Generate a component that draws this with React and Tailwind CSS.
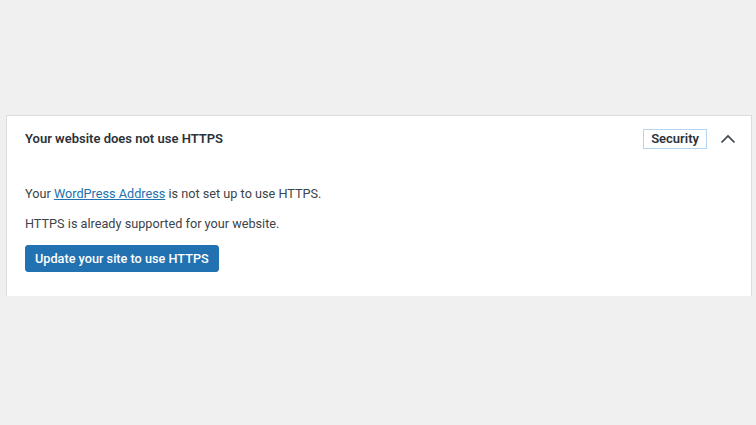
export default function App() {
  return (
    <div
      className="min-h-[425px] w-full bg-[#f0f0f1] pt-[115px] pl-[6px] pr-[4px]"
      style={{ fontFamily: 'Roboto, "Liberation Sans", Arial, sans-serif' }}
    >
      <div className="bg-white border-t border-l border-r border-[#dcdcde] text-[#1d2327]">
        <div className="h-[46px] flex items-center pl-[18px] pr-[15px]">
          <h4 className="flex-1 text-[13px] font-semibold text-[#2c3338]">Your website does not use HTTPS</h4>
          <span className="h-[20px] px-[7px] flex items-center border border-[#b5d6f2] text-[13px] font-semibold text-[#2c3338]">
            Security
          </span>
          <svg className="ml-[13px]" width="16" height="10" viewBox="0 0 16 10" fill="none">
            <polyline points="1.5,8.5 8,2 14.5,8.5" stroke="#3c434a" strokeWidth="1.7" />
          </svg>
        </div>
        <div className="pl-[18px] pt-[22px] pb-[24px] text-[12.7px] text-[#3c434a]">
          <p className="leading-[20px]">
            Your{" "}
            <a href="#" className="text-[#2271b1] underline">WordPress Address</a>{" "}
            is not set up to use HTTPS.
          </p>
          <p className="leading-[20px] mt-[10px]">HTTPS is already supported for your website.</p>
          <button className="mt-[11px] h-[27px] px-[9px] rounded-[3px] bg-[#2271b1] text-white text-[12.7px] font-medium border border-[#2271b1]">
            Update your site to use HTTPS
          </button>
        </div>
      </div>
    </div>
  );
}
